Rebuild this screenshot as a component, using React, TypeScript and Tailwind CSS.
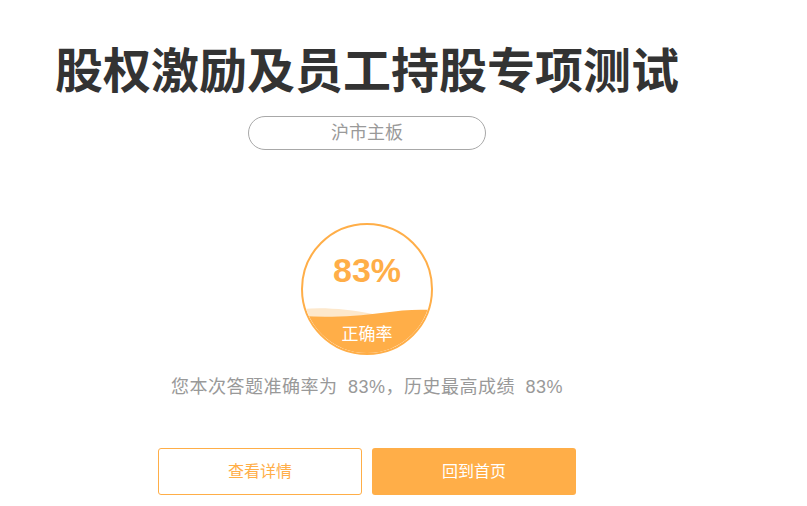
import React from "react";

const cjk = { fontFamily: '"Liberation Sans", "Noto Sans CJK SC", sans-serif' };

export default function App() {
  return (
    <div className="w-[807px] h-[506px] bg-white overflow-hidden" style={cjk}>
      <div className="w-[734px] flex flex-col items-center pt-[43px]">
        <h1
          className="text-[48px] leading-[48px] font-bold text-[#333333]"
          style={{ fontFamily: '"Noto Sans CJK SC", sans-serif' }}
        >
          股权激励及员工持股专项测试
        </h1>
        <div className="mt-[25px] w-[238px] h-[34px] rounded-full border border-[#a8a8a8] flex items-center justify-center text-[18px] text-[#9a9a9a]">
          沪市主板
        </div>
        <div className="mt-[73px] relative w-[132px] h-[132px] rounded-full border-2 border-[#ffae48] overflow-hidden flex flex-col items-center">
          <svg
            className="absolute left-0 top-0"
            width="128"
            height="128"
            viewBox="0 0 128 128"
          >
            <path
              d="M0 84 C 20 82, 45 84, 70 89 C 90 92, 110 90, 128 87 L128 128 L0 128 Z"
              fill="#fde8cc"
            />
            <path
              d="M0 91 C 25 93, 55 91, 78 88 C 98 85, 115 84, 128 85 L128 128 L0 128 Z"
              fill="#ffae48"
            />
          </svg>
          <div className="relative mt-[25px] text-[34px] leading-[40px] font-bold text-[#ffae48]">83%</div>
          <div className="relative mt-[33px] text-[17px] leading-[24px] text-white">正确率</div>
        </div>
        <div className="mt-[20px] text-[18px] leading-[24px] text-[#999999] tracking-[0.5px] [word-spacing:5px]">
          您本次答题准确率为 83%，历史最高成绩 83%
        </div>
        <div className="mt-[49px] flex gap-[10px]">
          <button className="w-[204px] h-[47px] rounded-[3px] border border-[#ffae48] bg-white text-[16px] text-[#ffae48]">
            查看详情
          </button>
          <button className="w-[204px] h-[47px] rounded-[3px] bg-[#ffae48] text-[16px] text-white">
            回到首页
          </button>
        </div>
      </div>
    </div>
  );
}
